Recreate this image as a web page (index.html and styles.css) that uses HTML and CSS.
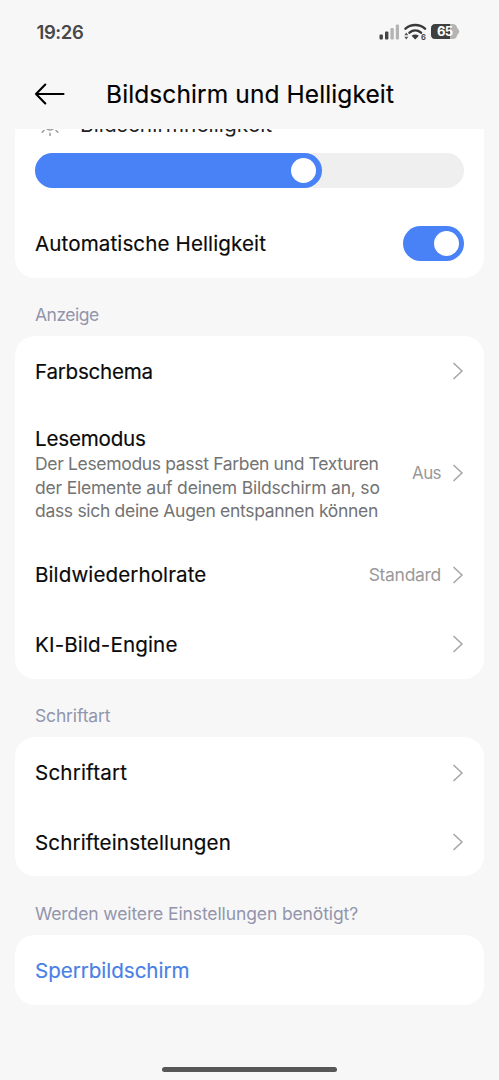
FILE: index.html
```html
<!DOCTYPE html>
<html lang="de">
<head>
<meta charset="utf-8">
<title>Bildschirm und Helligkeit</title>
<link rel="stylesheet" href="styles.css">
</head>
<body>
<div class="screen">
  <div class="status">
    <span class="time">19:26</span>
    <svg class="status-icons" width="84" height="20" viewBox="0 0 84 20">
      <rect x="2.500" y="13.500" width="3.400" height="5" rx="1" fill="#444"/>
      <rect x="8" y="10.500" width="3.400" height="8" rx="1" fill="#444"/>
      <rect x="13.400" y="7" width="3.400" height="11.500" rx="1" fill="#b4b4b4"/>
      <rect x="18.800" y="3.500" width="3.200" height="15" rx="1" fill="#b4b4b4"/>
      <g fill="none" stroke="#3a3a3a" stroke-width="2.500" stroke-linecap="round">
        <path d="M28.500 7.600C34 2.900 42.500 2.900 48 7.600"/>
        <path d="M32.500 11.600C36 8.700 40.500 8.700 44 11.600"/>
      </g>
      <path d="M34.600 14.800Q38.200 12.200 41.900 14.800L38.200 18.500Z" fill="#3a3a3a"/>
      <path d="M27.300 14.300L29.300 11.600L31.300 14.300ZM27.300 15.800L29.300 18.500L31.300 15.800Z" fill="#555"/>
      <text x="44" y="18.800" class="wifi-gen">6</text>
      <path d="M58.500 3H75.500Q79.500 3 80 6.500L82 9.300Q82.500 10.500 82 11.700L80 14.500Q79.500 18 75.500 18H58.500Q54 18 54 13.500V7.500Q54 3 58.500 3Z" fill="#b4b4b4"/>
      <path d="M58.500 3H73V18H58.500Q54 18 54 13.500V7.500Q54 3 58.500 3Z" fill="#3f3f3f"/>
      <text x="60" y="15.400" class="battery-level">65</text>
    </svg>
  </div>
  <header class="header">
    <svg width="32" height="24" viewBox="0 0 32 24" fill="none" stroke="#000" stroke-width="2.100" stroke-linecap="round" stroke-linejoin="round"><path d="M11.300 2.500L2 12L11.300 21.500M2 12H29.500"/></svg>
    <h1 class="title">Bildschirm und Helligkeit</h1>
  </header>
  <main class="content">
    <section class="card card-brightness">
      <div class="brightness-head">
        <svg width="30" height="30" viewBox="0 0 30 30" fill="none" stroke="#999" stroke-width="1.500" stroke-linecap="round"><circle cx="15" cy="15" r="5"/><path d="M15 4V7M15 23.200V25.500M4.500 15H7M23 15H25.500M7.500 7.500L9 9M21 9L22.500 7.500M9 20.500L7.200 22.200M21 20.500L22.800 22.200"/></svg>
        <span class="brightness-label">Bildschirmhelligkeit</span>
      </div>
      <div class="slider"><div class="slider-fill"><div class="knob"></div></div></div>
      <div class="row row-auto">
        <span class="name n-auto">Automatische Helligkeit</span>
        <div class="toggle"><div class="knob"></div></div>
      </div>
    </section>

    <h2 class="label l-anzeige">Anzeige</h2>
    <section class="card">
      <div class="row"><span class="name n-farb">Farbschema</span><svg class="chev" viewBox="0 0 12 18"><path d="M2 1.500L10 9L2 16.500"/></svg></div>
      <div class="row row-tall">
        <div class="texts">
          <span class="name n-lese">Lesemodus</span>
          <p class="desc"><span class="d1">Der Lesemodus passt Farben und Texturen</span><br><span class="d2">der Elemente auf deinem Bildschirm an, so</span><br><span class="d3">dass sich deine Augen entspannen können</span></p>
        </div>
        <span class="value v-aus">Aus</span><svg class="chev" viewBox="0 0 12 18"><path d="M2 1.500L10 9L2 16.500"/></svg>
      </div>
      <div class="row"><span class="name n-rate">Bildwiederholrate</span><span class="value v-std">Standard</span><svg class="chev" viewBox="0 0 12 18"><path d="M2 1.500L10 9L2 16.500"/></svg></div>
      <div class="row"><span class="name n-ki">KI-Bild-Engine</span><svg class="chev" viewBox="0 0 12 18"><path d="M2 1.500L10 9L2 16.500"/></svg></div>
    </section>

    <h2 class="label l-schrift">Schriftart</h2>
    <section class="card">
      <div class="row"><span class="name n-schrift">Schriftart</span><svg class="chev" viewBox="0 0 12 18"><path d="M2 1.500L10 9L2 16.500"/></svg></div>
      <div class="row"><span class="name n-einst">Schrifteinstellungen</span><svg class="chev" viewBox="0 0 12 18"><path d="M2 1.500L10 9L2 16.500"/></svg></div>
    </section>

    <h2 class="label l-mehr">Werden weitere Einstellungen benötigt?</h2>
    <section class="card">
      <div class="row"><span class="name link n-sperr">Sperrbildschirm</span></div>
    </section>
  </main>
  <div class="home-bar"></div>
</div>
</body>
</html>
```
FILE: styles.css
```css
* { box-sizing: border-box; }
body { margin: 0; background: #f7f7f7; font-family: Inter, Roboto, sans-serif; color: #0a0a0a; }
.screen { width: 499px; height: 1080px; display: flex; flex-direction: column; overflow: hidden; }
.status { height: 60px; padding: 3px 38px 0 36.5px; display: flex; justify-content: space-between; align-items: center; }
.status-icons { margin-bottom: 1px; }
.time { font-size: 18.5px; font-weight: 600; color: #484848; letter-spacing: -0.4px; }
.wifi-gen { font: 700 7.500px Inter, sans-serif; fill: #444; }
.battery-level { font: 700 13px Inter, sans-serif; fill: #fff; letter-spacing: -0.6px; }
.header { height: 69px; padding: 0 34px 1px; display: flex; align-items: center; gap: 40px; }
.title { margin: 0; font-size: 24.5px; font-weight: 400; line-height: 32px; white-space: nowrap; color: #000; letter-spacing: 0.1px; -webkit-text-stroke: 0.15px; }
.content { height: 890px; padding: 0 15px; overflow: hidden; }
.card { background: #fff; border-radius: 20px; overflow: hidden; }
.card-brightness { height: 148.500px; border-radius: 0 0 20px 20px; padding: 0 20px; }
.brightness-head { display: flex; align-items: center; gap: 15px; height: 30px; margin-top: -19px; }
.brightness-label { font-size: 20.800px; line-height: 30px; letter-spacing: 0.1px; color: #222; }
.slider { height: 35px; margin-top: 13px; border-radius: 18px; background: #efefef; }
.slider-fill { width: 286.500px; height: 35px; border-radius: 18px; background: #4981f7; padding: 5px 5.500px; display: flex; justify-content: flex-end; }
.knob { width: 25px; height: 25px; border-radius: 50%; background: #fff; }
.toggle { width: 61px; height: 35px; margin-top: 1px; border-radius: 18px; background: #4981f7; padding: 5px; display: flex; justify-content: flex-end; }
.row { height: 69.600px; padding: 0 20px; display: flex; align-items: center; }
.row-auto { padding: 0; margin-top: 20px; }
.row-tall { height: 134px; }
.texts { flex: 1; padding-top: 2px; }
.name { flex: 1; display: block; padding-top: 2px; font-size: 20.6px; line-height: 26px; white-space: nowrap; -webkit-text-stroke: 0.15px; }
.desc { margin: 0; font-size: 17.5px; line-height: 23.400px; color: #737373; white-space: nowrap; }
.value { padding-top: 1px; font-size: 17.5px; line-height: 24px; color: #999; margin-right: 11px; }
.chev { width: 12px; height: 18px; margin-top: 1px; fill: none; stroke: #a8a8a8; stroke-width: 1.7; stroke-linecap: round; stroke-linejoin: round; }
.label { margin: 0; height: 58.500px; padding: 24.500px 20px 0; font-size: 17.5px; font-weight: 400; line-height: 26px; color: #9295ac; white-space: nowrap; }
.link { color: #4a7fe5; }
.n-auto { letter-spacing: 0.1px; }
.n-farb { letter-spacing: -0.25px; }
.n-lese { letter-spacing: -0.2px; }
.n-rate { letter-spacing: 0.08px; }
.n-ki { letter-spacing: 0.13px; }
.n-schrift { letter-spacing: 0.18px; }
.n-einst { letter-spacing: 0.13px; }
.n-sperr { letter-spacing: -0.04px; }
.d1 { letter-spacing: -0.33px; }
.d2 { letter-spacing: -0.2px; }
.d3 { letter-spacing: -0.31px; }
.v-aus { font-size: 17px; letter-spacing: -0.6px; }
.v-std { letter-spacing: -0.3px; }
.l-anzeige { letter-spacing: -0.5px; }
.l-schrift { letter-spacing: -0.15px; }
.l-mehr { letter-spacing: -0.11px; }
.home-bar { width: 175px; height: 5px; margin: 48px auto 0; border-radius: 3px; background: #575757; }
```
